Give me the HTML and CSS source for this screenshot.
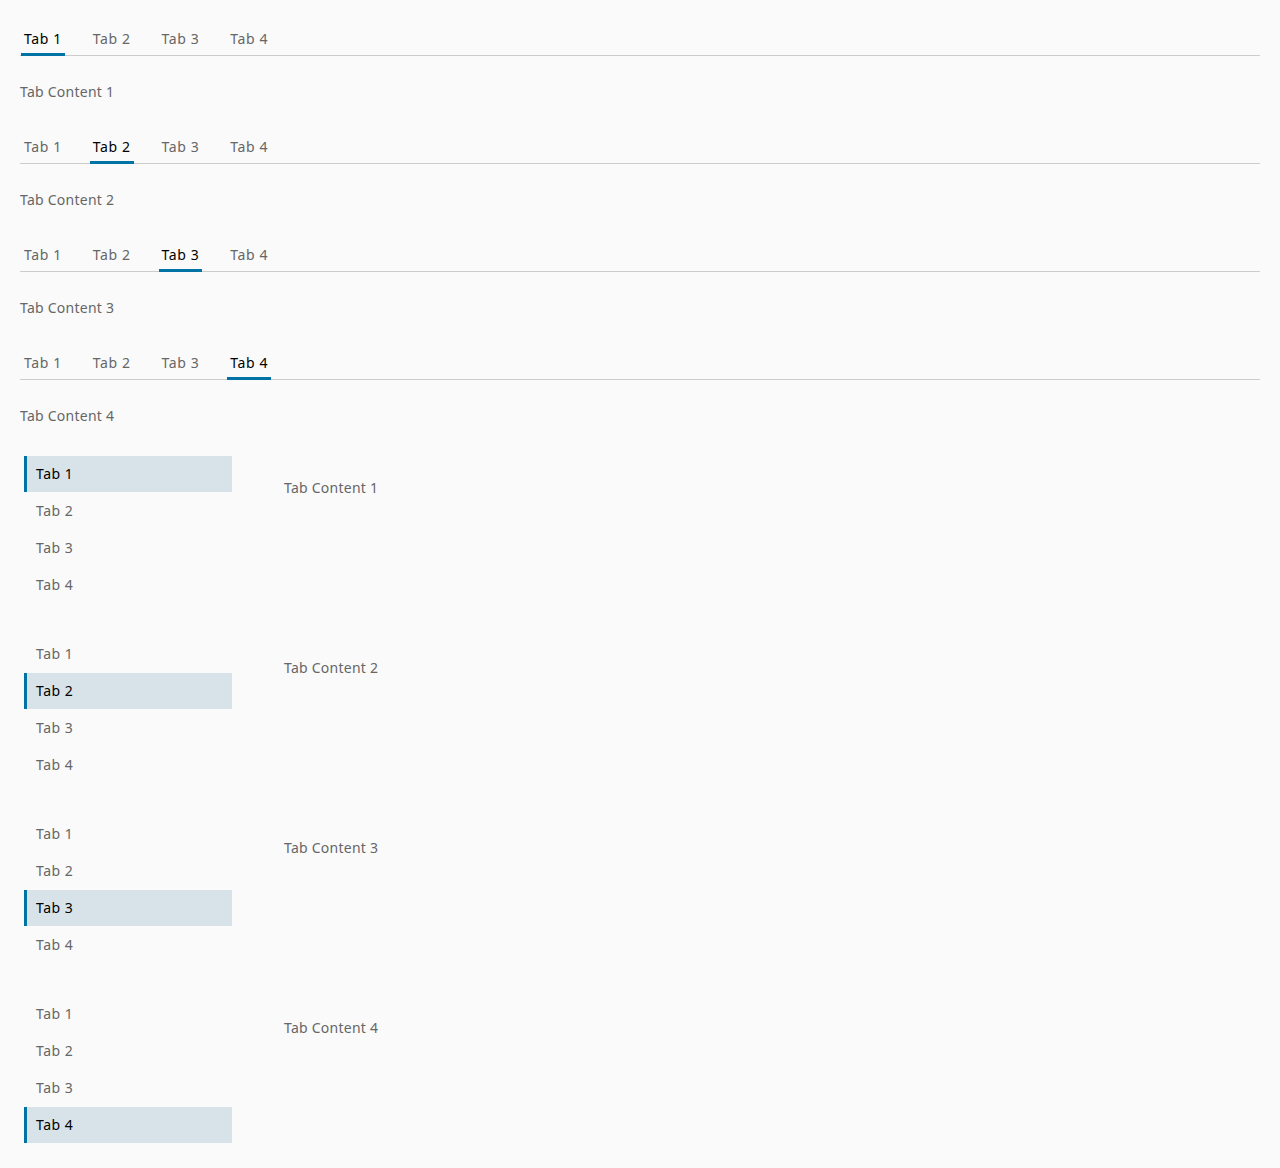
FILE: index.html
```html
<!DOCTYPE html>
<html lang="en">
<head>
<meta charset="utf-8">
<title>Tabs</title>
<link rel="stylesheet" href="styles.css">
</head>
<body>
<div class="page">
  <section class="htabs">
    <ul class="nav">
      <li class="nav-item active">Tab 1</li>
      <li class="nav-item">Tab 2</li>
      <li class="nav-item">Tab 3</li>
      <li class="nav-item">Tab 4</li>
    </ul>
    <p class="content">Tab Content 1</p>
  </section>
  <section class="htabs">
    <ul class="nav">
      <li class="nav-item">Tab 1</li>
      <li class="nav-item active">Tab 2</li>
      <li class="nav-item">Tab 3</li>
      <li class="nav-item">Tab 4</li>
    </ul>
    <p class="content">Tab Content 2</p>
  </section>
  <section class="htabs">
    <ul class="nav">
      <li class="nav-item">Tab 1</li>
      <li class="nav-item">Tab 2</li>
      <li class="nav-item active">Tab 3</li>
      <li class="nav-item">Tab 4</li>
    </ul>
    <p class="content">Tab Content 3</p>
  </section>
  <section class="htabs">
    <ul class="nav">
      <li class="nav-item">Tab 1</li>
      <li class="nav-item">Tab 2</li>
      <li class="nav-item">Tab 3</li>
      <li class="nav-item active">Tab 4</li>
    </ul>
    <p class="content">Tab Content 4</p>
  </section>

  <section class="vtabs">
    <ul class="vnav">
      <li class="vnav-item active">Tab 1</li>
      <li class="vnav-item">Tab 2</li>
      <li class="vnav-item">Tab 3</li>
      <li class="vnav-item">Tab 4</li>
    </ul>
    <p class="vcontent">Tab Content 1</p>
  </section>
  <section class="vtabs">
    <ul class="vnav">
      <li class="vnav-item">Tab 1</li>
      <li class="vnav-item active">Tab 2</li>
      <li class="vnav-item">Tab 3</li>
      <li class="vnav-item">Tab 4</li>
    </ul>
    <p class="vcontent">Tab Content 2</p>
  </section>
  <section class="vtabs">
    <ul class="vnav">
      <li class="vnav-item">Tab 1</li>
      <li class="vnav-item">Tab 2</li>
      <li class="vnav-item active">Tab 3</li>
      <li class="vnav-item">Tab 4</li>
    </ul>
    <p class="vcontent">Tab Content 3</p>
  </section>
  <section class="vtabs">
    <ul class="vnav">
      <li class="vnav-item">Tab 1</li>
      <li class="vnav-item">Tab 2</li>
      <li class="vnav-item">Tab 3</li>
      <li class="vnav-item active">Tab 4</li>
    </ul>
    <p class="vcontent">Tab Content 4</p>
  </section>
</div>
</body>
</html>
```

FILE: styles.css
```css
* { box-sizing: border-box; }

html, body {
  margin: 0;
  padding: 0;
  background: #fafafa;
}

body {
  font-family: "Noto Sans", "Open Sans", sans-serif;
  font-size: 14px;
  color: #666666;
}

.page {
  padding: 20px;
}

ul {
  list-style: none;
  margin: 0;
  padding: 0;
}

p { margin: 0; }

.htabs {
  margin-bottom: 24px;
}

.nav {
  display: flex;
  height: 36px;
  padding-left: 1px;
  gap: 25px;
  box-shadow: inset 0 -1px 0 #cccccc;
}

.nav-item {
  padding: 1px 3px 0;
  line-height: 35px;
  letter-spacing: 0.6px;
  color: #666666;
}

.nav-item.active {
  color: #000000;
  box-shadow: inset 0 -3px 0 #0072a3;
}

.content {
  margin-top: 24px;
  line-height: 24px;
  letter-spacing: 0.25px;
}

.vtabs {
  display: flex;
  margin-top: 24px;
}

.vnav {
  width: 212px;
  padding: 4px 0 4px 4px;
  display: flex;
  flex-direction: column;
}

.vnav-item {
  height: 36px;
  margin-bottom: 1px;
  line-height: 36px;
  padding-left: 12px;
  letter-spacing: 0.5px;
  color: #666666;
}

.vnav-item.active {
  background: #d8e3e9;
  border-left: 3px solid #0072a3;
  padding-left: 9px;
  color: #000000;
}

.vcontent {
  padding: 24px 0 0 52px;
  line-height: 24px;
  letter-spacing: 0.25px;
}
```
